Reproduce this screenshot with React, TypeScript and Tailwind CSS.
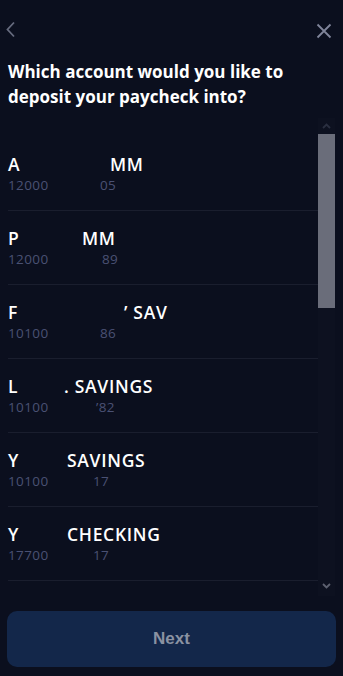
type Account = { a: string; b: string; bx: number; n1: string; n2: string; n2x: number };

const accounts: Account[] = [
  { a: 'A', b: 'MM', bx: 110, n1: '12000', n2: '05', n2x: 100 },
  { a: 'P', b: 'MM', bx: 82, n1: '12000', n2: '89', n2x: 102 },
  { a: 'F', b: '’ SAV', bx: 124, n1: '10100', n2: '86', n2x: 100 },
  { a: 'L', b: '. SAVINGS', bx: 64, n1: '10100', n2: '’82', n2x: 96 },
  { a: 'Y', b: 'SAVINGS', bx: 67, n1: '10100', n2: '17', n2x: 93 },
  { a: 'Y', b: 'CHECKING', bx: 67, n1: '17700', n2: '17', n2x: 93 },
];

function Row({ acc }: { acc: Account }) {
  return (
    <div className="h-[74px] border-b border-[#1a1e2e] flex flex-col justify-center pb-[2px]">
      <div className="flex h-[22px] text-[17.5px] font-semibold text-white tracking-[0.7px] whitespace-nowrap">
        <span className="inline-block shrink-0" style={{ width: acc.bx - 8 }}>{acc.a}</span>
        <span>{acc.b}</span>
      </div>
      <div className="flex h-[20px] mt-[2px] text-[13.5px] text-[#4a5173] tracking-[0.4px] whitespace-nowrap">
        <span className="inline-block shrink-0" style={{ width: acc.n2x - 8 }}>{acc.n1}</span>
        <span>{acc.n2}</span>
      </div>
    </div>
  );
}

export default function App() {
  return (
    <div className="w-[343px] h-[676px] bg-[#0b0f1e] flex flex-col font-['Open_Sans',sans-serif]">
      <div className="h-[59px] flex items-start justify-between pt-[21px] pl-[5px] pr-[11px]">
        <svg width="11" height="17" viewBox="0 0 11 17" className="text-[#666b7e]">
          <path d="M9 1.5 L2.5 8.5 L9 15.5" fill="none" stroke="currentColor" strokeWidth="1.8" />
        </svg>
        <svg width="16" height="16" viewBox="0 0 16 16" className="text-[#80859a] mt-[2px]">
          <path d="M1.5 1.5 L14.5 14.5 M14.5 1.5 L1.5 14.5" fill="none" stroke="currentColor" strokeWidth="1.8" />
        </svg>
      </div>
      <h1 className="px-[8px] text-[17px] leading-[25px] font-bold text-white">
        Which account would you like to
        <br />
        deposit your paycheck into?
      </h1>
      <div className="mt-[9px] h-[478px] flex pl-[7px] pr-[8px]">
        <div className="flex-1 pt-[19px] pl-[1px]">
          {accounts.map((acc, i) => (
            <Row key={i} acc={acc} />
          ))}
        </div>
        <div className="w-[17px] bg-[#0d1120] flex flex-col items-center">
          <svg width="9" height="16" viewBox="0 0 9 16" className="text-[#2a2f40]">
            <path d="M1 10 L4.5 6.5 L8 10" fill="none" stroke="currentColor" strokeWidth="1.8" />
          </svg>
          <div className="w-[17px] h-[174px] bg-[#6a6d7a]" />
          <div className="flex-1" />
          <svg width="9" height="18" viewBox="0 0 9 18" className="text-[#5d6170]">
            <path d="M1 6 L4.5 9.5 L8 6" fill="none" stroke="currentColor" strokeWidth="1.8" />
          </svg>
        </div>
      </div>
      <div className="mt-[15px] mx-[7px] h-[56px] rounded-[10px] bg-[#13274a] flex items-center justify-center">
        <span className="font-['Liberation_Sans',sans-serif] font-bold text-[17px] text-[#8a92a2]">Next</span>
      </div>
    </div>
  );
}
